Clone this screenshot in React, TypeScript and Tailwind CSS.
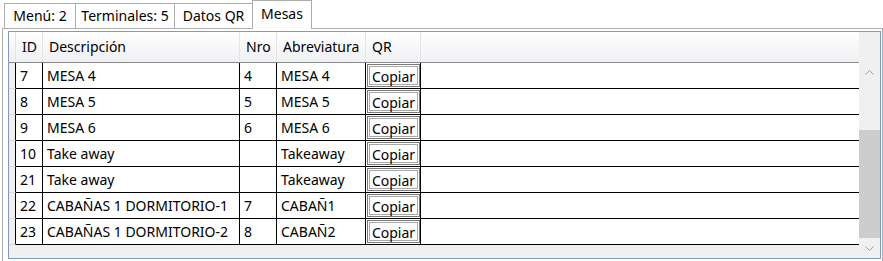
import React from "react";

interface Mesa {
  id: string;
  descripcion: string;
  nro: string;
  abreviatura: string;
}

const mesas: Mesa[] = [
  { id: "7", descripcion: "MESA 4", nro: "4", abreviatura: "MESA 4" },
  { id: "8", descripcion: "MESA 5", nro: "5", abreviatura: "MESA 5" },
  { id: "9", descripcion: "MESA 6", nro: "6", abreviatura: "MESA 6" },
  { id: "10", descripcion: "Take away", nro: "", abreviatura: "Takeaway" },
  { id: "21", descripcion: "Take away", nro: "", abreviatura: "Takeaway" },
  { id: "22", descripcion: "CABAÑAS 1 DORMITORIO-1", nro: "7", abreviatura: "CABAÑ1" },
  { id: "23", descripcion: "CABAÑAS 1 DORMITORIO-2", nro: "8", abreviatura: "CABAÑ2" },
];

const tabs = [
  { label: "Menú: 2", w: "w-[72px]" },
  { label: "Terminales: 5", w: "w-[100px]" },
  { label: "Datos QR", w: "w-[79px]" },
];

const headCell =
  "h-full flex items-center pl-[6px] border-r border-[#e3e4e6] bg-gradient-to-b from-white to-[#eff0f3]";
const cell = "h-full flex items-center pl-[4px] border-r border-black whitespace-nowrap overflow-hidden";

function Chevron({ up }: { up?: boolean }) {
  return (
    <svg width="9" height="5" viewBox="0 0 9 5">
      <polyline
        points={up ? "0.5,4.5 4.5,0.5 8.5,4.5" : "0.5,0.5 4.5,4.5 8.5,0.5"}
        fill="none"
        stroke="#a3a3a3"
        strokeWidth="1"
      />
    </svg>
  );
}

export default function App() {
  return (
    <div className="w-[883px] h-[261px] overflow-hidden bg-white text-black font-['Noto_Sans',sans-serif] text-[14px] leading-none">
      {/* tab strip */}
      <div className="flex items-end h-[28px] pl-[4px]">
        {tabs.map((t, i) => (
          <div
            key={t.label}
            className={`${t.w} h-[25px] ${i > 0 ? "-ml-px" : ""} border-t border-l border-r border-[#acacac] bg-white flex items-center justify-center pb-[1px]`}
          >
            {t.label}
          </div>
        ))}
        <div className="w-[60px] h-[29px] -ml-px -mb-px relative z-10 border-t border-l border-r border-[#acacac] bg-white flex items-center justify-center pb-[2px]">
          Mesas
        </div>
      </div>

      {/* tab page */}
      <div className="ml-[2px] w-[881px] h-[240px] border border-[#acacac] pt-[2px] pl-[5px]">
        <div className="w-[873px] h-[228px] border border-[#7d9ac0] flex">
          <div className="flex-1 flex flex-col bg-[#f0f0f0]">
            {/* header */}
            <div className="h-[31px] flex border-b border-[#8a8a8a] shrink-0">
              <div className="w-[7px] h-full border-r border-[#e3e4e6] bg-gradient-to-b from-white to-[#eff0f3]" />
              <div className={`w-[27px] ${headCell}`}>ID</div>
              <div className={`w-[197px] ${headCell}`}>Descripción</div>
              <div className={`w-[37px] ${headCell}`}>Nro</div>
              <div className={`w-[89px] ${headCell}`}>Abreviatura</div>
              <div className={`w-[55px] ${headCell}`}>QR</div>
              <div className="flex-1 h-full bg-gradient-to-b from-white to-[#eff0f3]" />
            </div>

            {/* rows */}
            {mesas.map((m) => (
              <div key={m.id} className="h-[26px] flex shrink-0">
                <div className="w-[7px] h-full bg-[#f0f0f0] border-b border-[#dadada] border-r border-r-black" />
                <div className="flex-1 flex bg-white border-b border-black">
                  <div className={`w-[27px] ${cell}`}>{m.id}</div>
                  <div className={`w-[197px] ${cell}`}>{m.descripcion}</div>
                  <div className={`w-[37px] ${cell}`}>{m.nro}</div>
                  <div className={`w-[89px] ${cell}`}>{m.abreviatura}</div>
                  <div className="w-[55px] h-full border-r border-black pl-px pt-px pb-px">
                    <button className="w-[53px] h-[23px] border border-[#7a7a7a] bg-white shadow-[inset_0_0_0_1px_#fff,inset_0_0_0_2px_#a8a8a8] flex items-center justify-center pt-[2px]">
                      Copiar
                    </button>
                  </div>
                  <div className="flex-1" />
                </div>
              </div>
            ))}
          </div>

          {/* vertical scrollbar */}
          <div className="w-[21px] flex flex-col bg-[#f0f0f0]">
            <div className="h-[30px]" />
            <div className="h-[21px] flex items-center justify-center">
              <Chevron up />
            </div>
            <div className="flex-1 flex flex-col pt-[47px]">
              <div className="flex-1 bg-[#cdcdcd]" />
            </div>
            <div className="h-[20px] flex items-center justify-center">
              <Chevron />
            </div>
          </div>
        </div>
      </div>
    </div>
  );
}
